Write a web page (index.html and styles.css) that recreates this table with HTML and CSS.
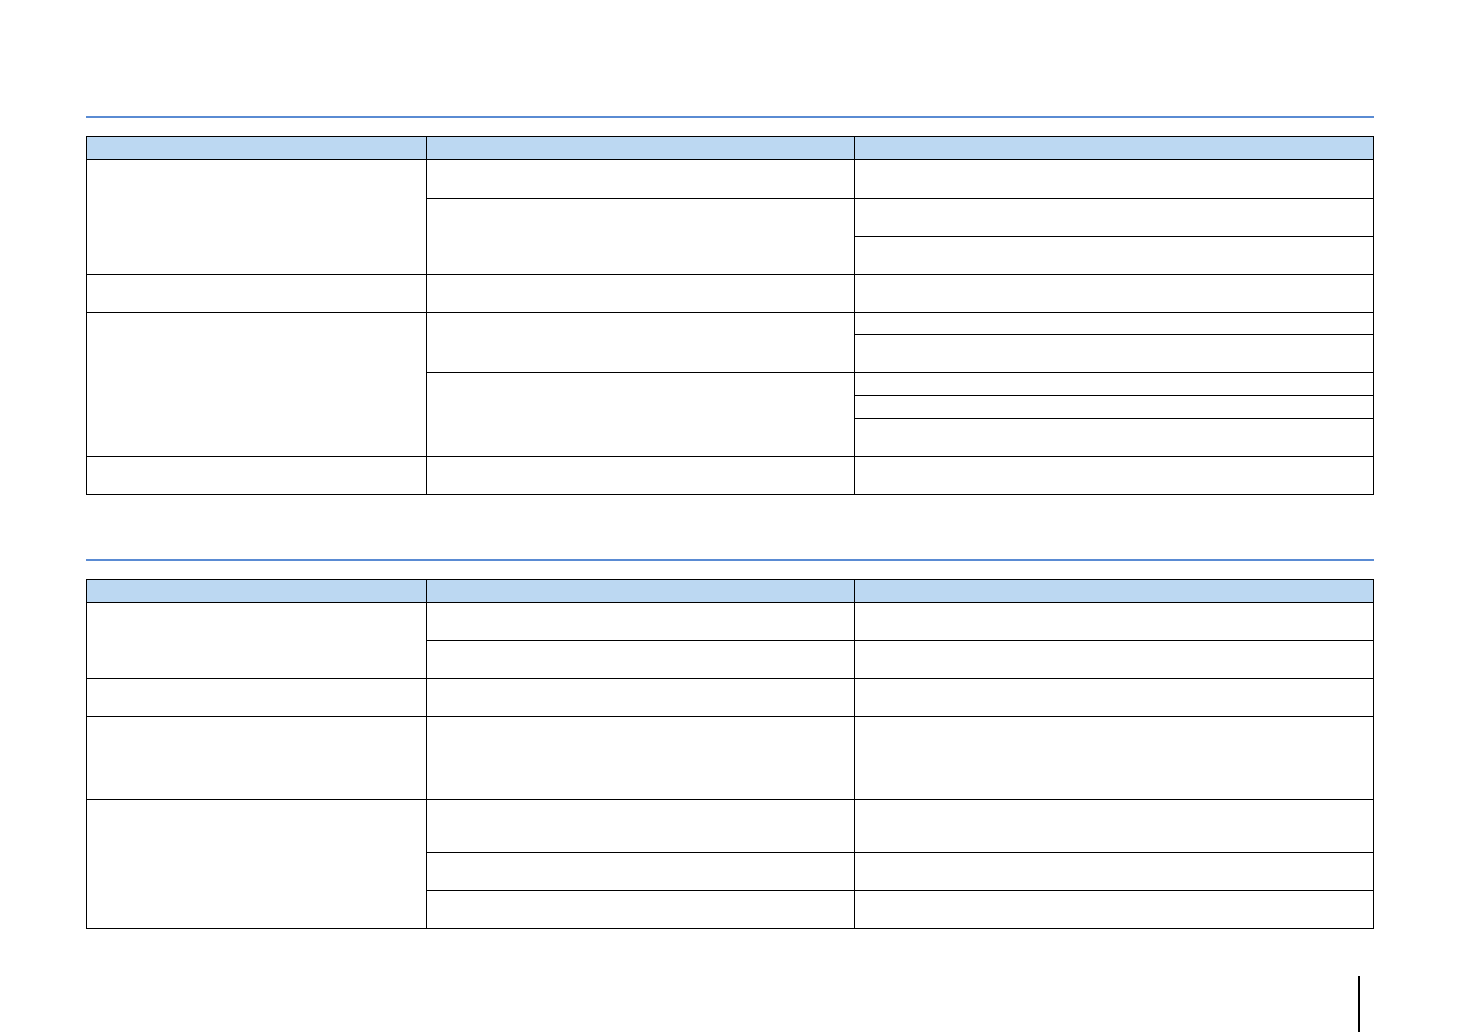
FILE: index.html
```html
<!DOCTYPE html>
<html lang="en">
<head>
<meta charset="utf-8">
<title>Tables</title>
<link rel="stylesheet" href="styles.css">
</head>
<body>
<div class="page">
  <section class="section first">
    <div class="rule"></div>
    <div class="grid t1">
      <div class="cell head"></div><div class="cell head"></div><div class="cell head"></div>

      <div class="cell span3"></div><div class="cell"></div><div class="cell"></div>
      <div class="cell span2"></div><div class="cell"></div>
      <div class="cell"></div>

      <div class="cell"></div><div class="cell"></div><div class="cell"></div>

      <div class="cell span5"></div><div class="cell span2"></div><div class="cell"></div>
      <div class="cell"></div>
      <div class="cell span3"></div><div class="cell"></div>
      <div class="cell"></div>
      <div class="cell"></div>

      <div class="cell"></div><div class="cell"></div><div class="cell"></div>
    </div>
  </section>

  <section class="section second">
    <div class="rule"></div>
    <div class="grid t2">
      <div class="cell head"></div><div class="cell head"></div><div class="cell head"></div>

      <div class="cell span2"></div><div class="cell"></div><div class="cell"></div>
      <div class="cell"></div><div class="cell"></div>

      <div class="cell"></div><div class="cell"></div><div class="cell"></div>

      <div class="cell"></div><div class="cell"></div><div class="cell"></div>

      <div class="cell span3"></div><div class="cell"></div><div class="cell"></div>
      <div class="cell"></div><div class="cell"></div>
      <div class="cell"></div><div class="cell"></div>
    </div>
  </section>

  <footer class="footer">
    <div class="page-mark"></div>
  </footer>
</div>
</body>
</html>
```

FILE: styles.css
```css
html, body {
  margin: 0;
  padding: 0;
  background: #ffffff;
  font-family: "Liberation Sans", Arial, sans-serif;
}

.page {
  width: 1458px;
  height: 1032px;
  overflow: hidden;
  padding-left: 86px;
  box-sizing: border-box;
}

.section.first {
  padding-top: 116px;
}

.section.second {
  padding-top: 64px;
}

.rule {
  width: 1288px;
  height: 2px;
  background: #5a8bd3;
  margin-bottom: 18px;
}

.grid {
  display: grid;
  width: 1288px;
  box-sizing: border-box;
  padding: 1px;
  gap: 1px;
  background: #000000;
  grid-template-columns: 339px 427px 518px;
}

.t1 {
  grid-template-rows: 22px 38px 37px 37px 37px 21px 37px 22px 22px 37px 37px;
}

.t2 {
  grid-template-rows: 22px 37px 37px 37px 82px 52px 37px 37px;
}

.cell {
  background: #ffffff;
}

.cell.head {
  background: #bcd8f2;
}

.span2 { grid-row: span 2; }
.span3 { grid-row: span 3; }
.span5 { grid-row: span 5; }

.footer {
  display: flex;
  justify-content: flex-end;
  padding-right: 98px;
  padding-top: 47px;
}

.page-mark {
  width: 2px;
  height: 56px;
  background: #000000;
}
```
